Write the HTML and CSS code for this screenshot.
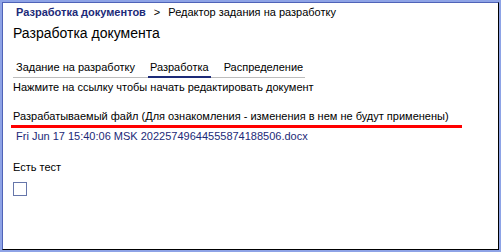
FILE: index.html
```html
<!DOCTYPE html>
<html lang="ru">

<head>
    <meta charset="UTF-8">
    <title>Разработка документа</title>
    <link rel="stylesheet" href="styles.css">
</head>

<body>
    <div class="frame">
        <div class="window">
            <!-- breadcrumbs -->
            <div class="crumbs">
                <a class="crumb-link" href="#">Разработка документов</a>
                <span class="crumb-sep">&gt;</span>
                <span class="crumb-current">Редактор задания на разработку</span>
            </div>

            <h1 class="title">Разработка документа</h1>

            <!-- tabs -->
            <div class="tabs">
                <span class="tab">Задание на разработку</span>
                <span class="tab active">Разработка</span>
                <span class="tab">Распределение</span>
            </div>

            <p class="hint">Нажмите на ссылку чтобы начать редактировать документ</p>

            <div class="file-block">
                <div class="file-caption">Разрабатываемый файл (Для ознакомления - изменения в нем не будут применены)</div>
                <a class="file-link" href="#">Fri Jun 17 15:40:06 MSK 20225749644555874188506.docx</a>
            </div>

            <div class="test-block">
                <div class="test-label">Есть тест</div>
                <input type="checkbox" class="test-check">
            </div>
        </div>
    </div>
</body>

</html>
```

FILE: styles.css
```css
* {
    margin: 0;
    padding: 0;
    box-sizing: border-box;
}

html,
body {
    height: 100%;
}

body {
    font-family: "Liberation Sans", Arial, sans-serif;
    font-size: 11px;
    line-height: 14px;
    background: #ffffff;
    color: #000000;
}

.frame {
    height: 100%;
    border: 2px solid #8ea3e6;
}

.window {
    height: 100%;
    border: 1px solid #000000;
    border-top-color: #4f63b8;
    border-left-color: #4f63b8;
    padding: 2px 10px 0 10px;
}

.crumbs {
    display: flex;
    gap: 8px;
    padding-left: 3px;
    white-space: nowrap;
}

.crumb-link {
    color: #1c2a78;
    font-weight: bold;
    text-decoration: none;
}

.title {
    font-size: 14px;
    line-height: 18px;
    font-weight: normal;
    margin-top: 5px;
}

.tabs {
    display: flex;
    gap: 11px;
    margin-top: 18px;
    width: 292px;
    border-bottom: 1px solid #bdbdbd;
    padding-left: 1px;
    white-space: nowrap;
}

.tab {
    padding: 0 2px 2px 2px;
    border-bottom: 2px solid transparent;
    margin-bottom: -1px;
}

.tab.active {
    border-bottom-color: #1c2a78;
}

.hint {
    margin-top: 2px;
}

.file-block {
    margin-top: 15px;
}

.file-caption {
    width: 451px;
    margin-left: -2px;
    padding: 0 0 2px 2px;
    border-bottom: 3px solid #ff0000;
    white-space: nowrap;
}

.file-link {
    display: block;
    color: #1c2a78;
    text-decoration: none;
    margin-top: 1px;
    padding-left: 3px;
}

.test-block {
    margin-top: 17px;
}

.test-check {
    appearance: none;
    display: block;
    width: 14px;
    height: 14px;
    margin-top: 8px;
    border: 1px solid #6676aa;
    background: #ffffff;
}
```
